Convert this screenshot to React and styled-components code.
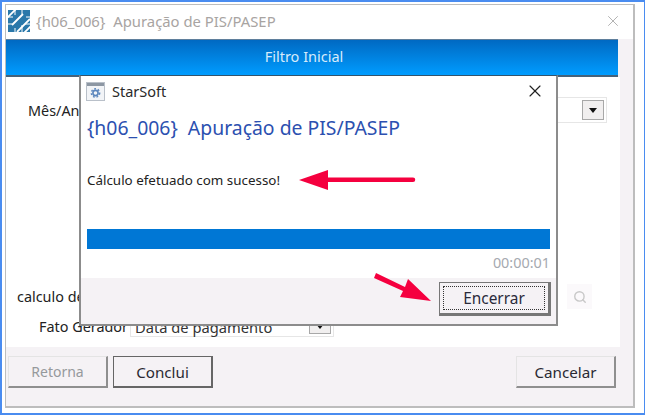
import React from 'react';
import styled, { createGlobalStyle } from 'styled-components';
import { X, Search } from 'lucide-react';

const Global = createGlobalStyle`
    html, body {
        margin: 0;
        padding: 0;
        background: #fff;
    }
    * {
        box-sizing: border-box;
    }
`;

const Frame = styled.div`
    position: relative;
    width: 645px;
    height: 415px;
    overflow: hidden;
    padding: 2px 9px 5px 3px;
    background: #fff;
    border: 2px solid #4a8cf0;
    border-width: 2px 1px 2px 2px;
    font-family: "Noto Sans", "Open Sans", sans-serif;
    color: #222;
`;

const Window = styled.div`
    display: flex;
    flex-direction: column;
    height: 100%;
    background: #f5f2f5;
    border: 1px solid #bdbdbd;
    border-width: 1px 2px 2px 1px;
`;

const TitleBar = styled.div`
    display: flex;
    align-items: center;
    height: 34px;
    flex: none;
    gap: 6px;
    padding: 0 11px 2px 2px;
    background: #fff;
    color: #a8a4a2;
    font-size: 14.85px;
    white-space: pre;
`;

const TitleText = styled.span`
    flex: 1;
`;

const Banner = styled.div`
    flex: none;
    height: 38px;
    margin-right: 15px;
    padding: 0 16px 4px 0;
    display: flex;
    align-items: center;
    justify-content: center;
    background: linear-gradient(#0069c2, #009cff);
    border-top: 1px solid #5f7f9c;
    border-bottom: 2px solid #45627a;
    color: #d6ebfb;
    font-size: 14.5px;
`;

const Body = styled.div`
    flex: 1;
    display: flex;
    flex-direction: column;
    margin-right: 13px;
    padding: 20px 0 10px;
    background: #fff;
`;

const Row = styled.div`
    display: flex;
    align-items: center;
    height: ${p => p.$height}px;
    margin-top: ${p => p.$top || 0};
`;

const Label = styled.span`
    flex: none;
    width: 124px;
    padding-left: ${p => p.$indent}px;
    font-size: 14.4px;
    white-space: nowrap;
`;

const Select = styled.div`
    width: ${p => p.$width}px;
    height: ${p => p.$height}px;
    display: flex;
    align-items: center;
    justify-content: space-between;
    padding: 2px 2px 2px 4px;
    background: #fff;
    border: 1px solid #e6e6e6;
    font-size: 14.7px;
    color: #333;
`;

const DropButton = styled.span`
    flex: none;
    display: flex;
    align-items: center;
    justify-content: center;
    width: 22px;
    height: 100%;
    background: #f1efef;
    border: 1px solid #a8a8a8;
    &::after {
        content: '';
        border-style: solid;
        border-width: 5px 4.5px 0;
        border-color: #111 transparent transparent;
    }
`;

const SearchBox = styled.div`
    margin-left: 437px;
    width: 25px;
    height: 25px;
    display: flex;
    align-items: center;
    justify-content: center;
    background: #fbf9fb;
    color: #c8c8c8;
`;

const Footer = styled.div`
    flex: none;
    height: 59px;
    display: flex;
    gap: 5px;
    padding: 9px 17px 0 2px;
`;

const Button = styled.button`
    width: 100px;
    height: 32px;
    padding: 0;
    margin-left: ${p => p.$push ? 'auto' : 0};
    background: #f5f2f5;
    font-family: inherit;
    font-size: ${p => p.$disabled ? 14 : 15.2}px;
    color: ${p => p.$disabled ? '#95999c' : '#2a2a33'};
    border: 1px solid ${p => p.$strong ? '#666' : '#e4e4e4'};
    border-right: 2px solid ${p => p.$strong ? '#666' : '#8f8f8f'};
    border-bottom: 2px solid ${p => p.$strong ? '#666' : '#8f8f8f'};
`;

const Modal = styled.div`
    position: absolute;
    left: 77px;
    top: 73px;
    width: 479px;
    height: 251px;
    display: flex;
    flex-direction: column;
    background: #fff;
    border: 2px solid #8c8c8c;
    border-top: 1px solid #33536b;
`;

const ModalTitle = styled.div`
    display: flex;
    align-items: center;
    gap: 7px;
    height: 30px;
    flex: none;
    padding: 0 11px 0 5px;
    font-size: 14.5px;
    color: #2a2a2a;
`;

const ModalName = styled.span`
    flex: 1;
`;

const ModalContent = styled.div`
    flex: 1;
    display: flex;
    flex-direction: column;
    padding: 7px 6px 0 6px;
`;

const Heading = styled.div`
    font-size: 19.4px;
    line-height: 30px;
    color: #2c50b0;
    white-space: pre;
`;

const Message = styled.div`
    margin-top: 28px;
    font-size: 13.4px;
    line-height: 18px;
    color: #222;
`;

const Progress = styled.div`
    margin-top: 40px;
    height: 20px;
    background: #0077d5;
`;

const Elapsed = styled.div`
    margin-top: 7px;
    text-align: right;
    font-size: 14.4px;
    line-height: 14px;
    color: #a5a9b0;
`;

const ModalFooter = styled.div`
    flex: none;
    height: 46px;
    display: flex;
    justify-content: flex-end;
    padding: 4px 5px 0 0;
    background: #f5f2f5;
`;

const CloseButton = styled.button`
    position: relative;
    width: 112px;
    height: 34px;
    padding: 0;
    background: #f5f2f5;
    font-family: inherit;
    font-size: 15.4px;
    color: #2a2a3a;
    border: 2px solid #777;
    border-width: 1px 3px 3px 1px;
    &::after {
        content: '';
        position: absolute;
        inset: 3px;
        border: 1px dotted #333;
    }
`;

const Arrow = styled.svg`
    position: absolute;
    left: 0;
    top: 0;
    pointer-events: none;
`;

function Logo() {
    return (
        <svg width="22" height="22" viewBox="0 0 22 22">
            <rect width="22" height="22" fill="#2a78aa" />
            <g stroke="#fff" strokeWidth="1.8">
                <path d="M-2 9L9 -2M4 15L15 4M9 22L22 9M15 24L24 15" />
                <path d="M7 0v5M14 0v4M0 7h5M0 14h4M7 18v4M14 15v7M18 7h4M17 14h5" strokeWidth="1" />
            </g>
        </svg>
    );
}

function AppIcon() {
    return (
        <svg width="19" height="19" viewBox="0 0 19 19">
            <rect x="0.5" y="0.5" width="18" height="18" fill="#f2f4f7" stroke="#b9c0c9" />
            <rect x="1" y="1" width="17" height="3" fill="#8d97a3" />
            <circle cx="9.5" cy="11" r="2.6" fill="none" stroke="#5b86bd" strokeWidth="1.6" />
            <circle cx="9.5" cy="11" r="4.2" fill="none" stroke="#5b86bd" strokeWidth="1.4" strokeDasharray="1.8 1.8" />
        </svg>
    );
}

function App() {
    const title = '{h06_006}  Apuração de PIS/PASEP';
    return (
        <Frame>
            <Global />
            <Window>
                <TitleBar>
                    <Logo />
                    <TitleText>{title}</TitleText>
                    <X size={18} strokeWidth={1} color="#9a9a9a" />
                </TitleBar>
                <Banner>Filtro Inicial</Banner>
                <Body>
                    <Row $height={26}>
                        <Label $indent={22}>Mês/Ano</Label>
                        <Select $width={477} $height={26}><span /><DropButton /></Select>
                    </Row>
                    <Row $height={25} $top="auto">
                        <Label $indent={11}>calculo de</Label>
                        <SearchBox><Search size={14} strokeWidth={2.4} /></SearchBox>
                    </Row>
                    <Row $height={21} $top="7px">
                        <Label $indent={33}>Fato Gerador</Label>
                        <Select $width={204} $height={21}>Data de pagamento<DropButton /></Select>
                    </Row>
                </Body>
                <Footer>
                    <Button $disabled>Retorna</Button>
                    <Button $strong>Conclui</Button>
                    <Button $push>Cancelar</Button>
                </Footer>
            </Window>
            <Modal>
                <ModalTitle>
                    <AppIcon />
                    <ModalName>StarSoft</ModalName>
                    <X size={20} strokeWidth={1.4} color="#222" />
                </ModalTitle>
                <ModalContent>
                    <Heading>{title}</Heading>
                    <Message>Cálculo efetuado com sucesso!</Message>
                    <Progress />
                    <Elapsed>00:00:01</Elapsed>
                </ModalContent>
                <ModalFooter>
                    <CloseButton>Encerrar</CloseButton>
                </ModalFooter>
            </Modal>
            <Arrow width="645" height="415" viewBox="2 2 645 415">
                <g fill="#f5003f" stroke="none">
                    <path d="M299 180L328 170V177.5H413a2 2 0 0 1 0 4.5H328V190Z" />
                    <path d="M374 278L376 273L405 287L408 279L431 301L400 297L403 291Z" />
                </g>
            </Arrow>
        </Frame>
    );
}

export default App;
